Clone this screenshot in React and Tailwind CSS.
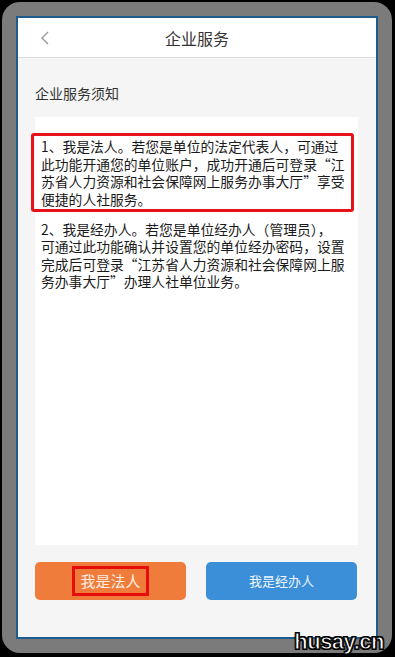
import React from "react";

const cjk = { fontFamily: '"Noto Sans CJK SC", "Noto Sans", sans-serif' };

export default function App() {
  return (
    <div className="w-[395px] h-[657px] bg-black p-[2px] pr-[3px] pb-[4px]" style={cjk}>
      <div className="relative h-full bg-[#7b7b7b] rounded-[18px] p-[14px]">
        <div className="h-full flex flex-col border-2 border-[#1d5c8c] bg-[#f5f5f5]">
          {/* header */}
          <div className="h-[40px] shrink-0 bg-white border-b border-[#dcdcdc] flex items-center relative">
            <svg width="10" height="14" viewBox="0 0 10 14" className="absolute left-[22px] top-[13px]">
              <polyline points="8,1 2,7 8,13" fill="none" stroke="#999" strokeWidth="1.4" />
            </svg>
            <div className="flex-1 text-center text-[16px] text-[#333]">企业服务</div>
          </div>

          <div className="flex-1 flex flex-col px-[17px] pr-[18px]">
            <div className="text-[14px] text-[#333] mt-[25px] leading-[20px]">企业服务须知</div>

            <div className="mt-[14px] h-[428px] bg-white pt-[16px]">
              <div className="-ml-[4px] w-[323px] border-[3px] border-[#e8121a] rounded-[3px] pl-[7px] pt-[2px] pb-[1px] text-[13.8px] leading-[17.5px] text-[#1a1a1a] whitespace-nowrap">
                1、我是法人。若您是单位的法定代表人，可通过
                <br />
                此功能开通您的单位账户，成功开通后可登录“江
                <br />
                苏省人力资源和社会保障网上服务办事大厅”享受
                <br />
                便捷的人社服务。
              </div>
              <div className="mt-[9px] pl-[6px] text-[13.8px] leading-[17.4px] text-[#1a1a1a] whitespace-nowrap">
                2、我是经办人。若您是单位经办人（管理员），
                <br />
                可通过此功能确认并设置您的单位经办密码，设置
                <br />
                完成后可登录“江苏省人力资源和社会保障网上服
                <br />
                务办事大厅”办理人社单位业务。
              </div>
            </div>

            <div className="mt-[17px] flex gap-[20px]">
              <button className="w-[151px] h-[38px] rounded-[5px] bg-[#ef7c3b] flex items-center justify-center">
                <span className="border-[3px] border-[#e80d0d] px-[5px] h-[30px] flex items-center text-[15px] text-[#fdeee2]">
                  我是法人
                </span>
              </button>
              <button className="w-[151px] h-[38px] rounded-[5px] bg-[#3b8fd9] flex items-center justify-center text-[13px] text-[#eef5fc]">
                我是经办人
              </button>
            </div>
          </div>
        </div>

        <div
          className="absolute right-[8px] bottom-[-1px] text-[22px] font-bold text-white leading-[24px] tracking-[-0.5px]"
          style={{
            fontFamily: '"Liberation Sans", Arial, sans-serif',
            WebkitTextStroke: "1px #000",
            textShadow: "1px 1px 0 #000, -1px -1px 0 #000, 1px -1px 0 #000, -1px 1px 0 #000",
          }}
        >
          husay.cn
        </div>
      </div>
    </div>
  );
}
